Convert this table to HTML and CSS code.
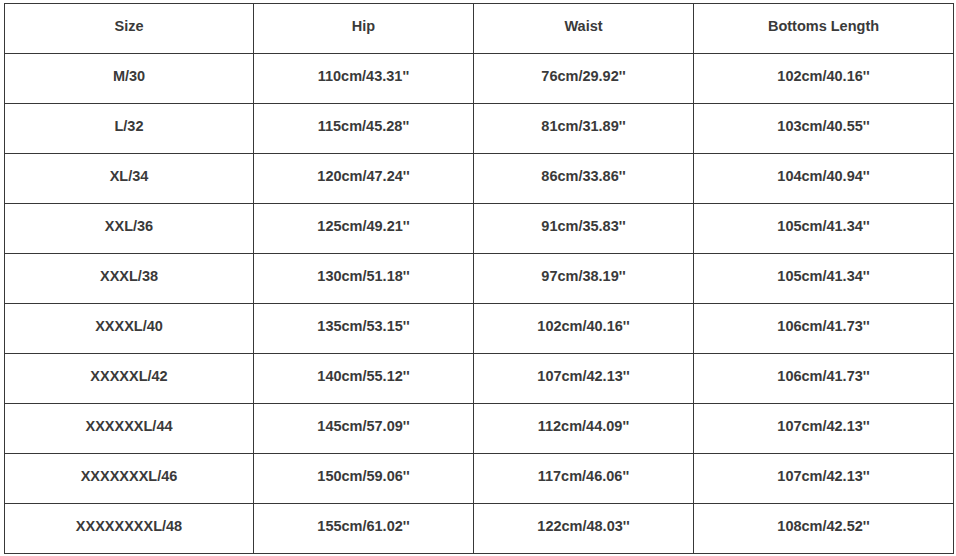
FILE: index.html
```html
<!DOCTYPE html>
<html>
<head>
<meta charset="utf-8">
<link rel="stylesheet" href="styles.css">
</head>
<body>
<table class="size-table">
  <colgroup>
    <col class="c1"><col class="c2"><col class="c3"><col class="c4">
  </colgroup>
  <tr><td>Size</td><td>Hip</td><td>Waist</td><td>Bottoms Length</td></tr>
  <tr><td>M/30</td><td>110cm/43.31''</td><td>76cm/29.92''</td><td>102cm/40.16''</td></tr>
  <tr><td>L/32</td><td>115cm/45.28''</td><td>81cm/31.89''</td><td>103cm/40.55''</td></tr>
  <tr><td>XL/34</td><td>120cm/47.24''</td><td>86cm/33.86''</td><td>104cm/40.94''</td></tr>
  <tr><td>XXL/36</td><td>125cm/49.21''</td><td>91cm/35.83''</td><td>105cm/41.34''</td></tr>
  <tr><td>XXXL/38</td><td>130cm/51.18''</td><td>97cm/38.19''</td><td>105cm/41.34''</td></tr>
  <tr><td>XXXXL/40</td><td>135cm/53.15''</td><td>102cm/40.16''</td><td>106cm/41.73''</td></tr>
  <tr><td>XXXXXL/42</td><td>140cm/55.12''</td><td>107cm/42.13''</td><td>106cm/41.73''</td></tr>
  <tr><td>XXXXXXL/44</td><td>145cm/57.09''</td><td>112cm/44.09''</td><td>107cm/42.13''</td></tr>
  <tr><td>XXXXXXXL/46</td><td>150cm/59.06''</td><td>117cm/46.06''</td><td>107cm/42.13''</td></tr>
  <tr><td>XXXXXXXXL/48</td><td>155cm/61.02''</td><td>122cm/48.03''</td><td>108cm/42.52''</td></tr>
</table>
</body>
</html>
```

FILE: styles.css
```css
html, body {
  margin: 0;
  padding: 0;
  background: #ffffff;
}
body {
  padding: 3px 0 0 4px;
}
.size-table {
  border-collapse: collapse;
  table-layout: fixed;
  width: 949px;
  font-family: "Liberation Sans", Arial, sans-serif;
  font-size: 14.5px;
  font-weight: 700;
  color: #3a3a3a;
}
.c1 { width: 249px; }
.c2 { width: 220px; }
.c3 { width: 220px; }
.c4 { width: 260px; }
.size-table td {
  border: 1px solid #383838;
  height: 49px;
  padding: 0 0 5px 0;
  box-sizing: border-box;
  text-align: center;
  vertical-align: middle;
  white-space: nowrap;
}
.size-table tr { height: 50px; }
```
